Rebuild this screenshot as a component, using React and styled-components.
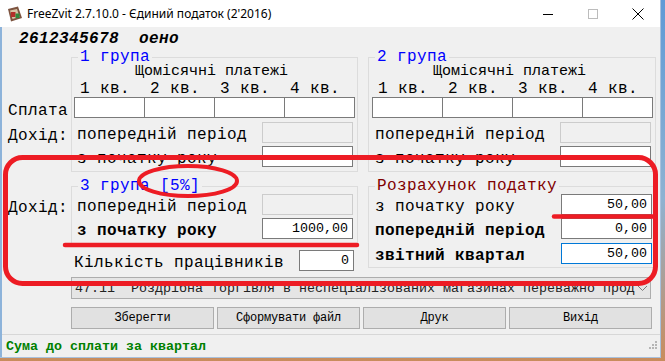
import React from 'react'
import styled, {createGlobalStyle} from 'styled-components'

const MONO = `"Liberation Mono", "Courier New", monospace`

const COLORS = {
  FACE: '#f0f0f0',
  GROUP_BORDER: '#dcdcdc',
  BOX_BORDER: '#7a7a7a',
  BOX_DISABLED: '#cccccc',
  FOCUS: '#0078d7',
  BLUE: '#0000ff',
  MAROON: '#800000',
  GREEN: '#008000',
  RED: '#ed1c24',
  FRAME: '#a9c1dc',
}

const GlobalStyle = createGlobalStyle`
  html, body {
    margin: 0;
    padding: 0;
  }
  body {
    width: 665px;
    height: 361px;
    overflow: hidden;
    background: #6b9fd2;
  }
`

const Desktop = styled.div`
  position: relative;
  width: 665px;
  height: 361px;
  overflow: hidden;
  background: linear-gradient(180deg, #5f9ad6 0%, #8eb2d2 55%, #c98c5c 100%);
`

const Window = styled.div`
  box-sizing: border-box;
  width: 661px;
  height: 358px;
  display: flex;
  flex-direction: column;
  border-right: 1px solid ${COLORS.FRAME};
  border-bottom: 1px solid ${COLORS.FRAME};
`

const TitleBar = styled.div`
  height: 27px;
  flex-shrink: 0;
  display: flex;
  align-items: center;
  background: #fff;
`

const AppIcon = styled.svg`
  margin-left: 7px;
  flex-shrink: 0;
`

const Title = styled.div`
  margin-left: 4px;
  flex-grow: 1;
  font: 12px "Noto Sans", "Liberation Sans", sans-serif;
  color: #000;
`

const CaptionButton = styled.div`
  width: 45px;
  height: 27px;
  display: flex;
  align-items: center;
  justify-content: center;
`

const Body = styled.div`
  flex-grow: 1;
  display: flex;
  flex-direction: column;
  background: ${COLORS.FACE};
  border-left: 2px solid #8db3da;
  font-family: ${MONO};
  color: #000;
`

const IdLine = styled.div`
  height: 23px;
  padding-left: 17px;
  font: italic bold 16px/25px ${MONO};
  letter-spacing: 0.4px;
  white-space: pre;
`

const MainGrid = styled.div`
  display: grid;
  grid-template-columns: 69px 287px 10px 288px;
  grid-template-areas:
    'side1 g1 . g2'
    'side2 g3 . g4';
  row-gap: 7px;
  align-items: start;
`

const LabelColumn = styled.div`
  grid-area: ${(p) => p.$area};
  display: flex;
  flex-direction: column;
  padding-top: ${(p) => p.$top}px;
`

const Cell = styled.div`
  grid-area: ${(p) => p.$area};
  display: flex;
  flex-direction: column;
  min-width: 0;
`

const SideLabel = styled.div`
  height: 21px;
  margin-top: ${(p) => p.$mt ?? 0}px;
  padding-left: 6px;
  font-size: 16px;
  line-height: 28px;
  letter-spacing: 0.4px;
  white-space: nowrap;
`

const Group = styled.fieldset`
  margin: 0;
  min-width: 0;
  padding: 0 0 ${(p) => p.$pb ?? 4}px;
  border: 1px solid ${COLORS.GROUP_BORDER};
`

const Legend = styled.legend`
  margin-left: 6px;
  padding: 0 2px;
  font-size: 16px;
  line-height: 14px;
  letter-spacing: 0.4px;
  color: ${(p) => p.$color};
  white-space: pre;
`

const Monthly = styled.div`
  height: 15px;
  padding-left: ${(p) => p.$indent}px;
  font-size: 15px;
  line-height: 15px;
`

const QuarterGrid = styled.div`
  display: grid;
  grid-template-columns: repeat(4, 70px);
  margin-left: ${(p) => p.$indent}px;
`

const QuarterLabel = styled.div`
  height: 18px;
  padding-left: 6px;
  font-size: 16px;
  line-height: 20px;
  letter-spacing: 0.4px;
  white-space: nowrap;
`

const FieldRow = styled.div`
  height: 21px;
  margin-top: ${(p) => p.$mt ?? 0}px;
  padding: 0 ${(p) => p.$right ?? 4}px 0 ${(p) => p.$indent ?? 5}px;
  display: flex;
  align-items: flex-start;
  justify-content: space-between;
`

const FieldLabel = styled.span`
  padding-top: 3px;
  font-size: 16px;
  line-height: 21px;
  font-weight: ${(p) => (p.$bold ? 700 : 400)};
  letter-spacing: 0.4px;
  white-space: nowrap;
`

const TextBox = styled.input`
  box-sizing: border-box;
  width: ${(p) => p.$w ?? 91}px;
  height: 21px;
  margin: 0;
  padding: 0 4px;
  background: ${(p) => (p.$disabled ? COLORS.FACE : '#fff')};
  border: 1px solid
    ${(p) =>
      p.$focused ? COLORS.FOCUS : p.$disabled ? COLORS.BOX_DISABLED : COLORS.BOX_BORDER};
  border-radius: 0;
  outline: none;
  font: 13.33px/19px ${MONO};
  color: #000;
  text-align: right;
`

const MonthBox = styled(TextBox)`
  width: 71px;
`

const Combo = styled.div`
  box-sizing: border-box;
  width: 580px;
  height: 22px;
  margin: 6px 0 0 69px;
  padding-left: 3px;
  display: flex;
  align-items: center;
  border: 1px solid #adadad;
  background: #e5e5e5;
  font-size: 13.33px;
  color: #222;
  white-space: pre;
  overflow: hidden;
`

const ComboText = styled.span`
  flex-grow: 1;
  overflow: hidden;
`

const ButtonRow = styled.div`
  display: grid;
  grid-template-columns: repeat(4, 143px);
  column-gap: 3px;
  margin: 8px 0 0 69px;
`

const Button = styled.button`
  height: 22px;
  margin: 0;
  padding: 0;
  border: 1px solid #adadad;
  background: #e1e1e1;
  font: 12px ${MONO};
  letter-spacing: -0.2px;
  color: #000;
`

const Separator = styled.div`
  height: 1px;
  margin-top: 5px;
  background: #d7d7d7;
`

const StatusBar = styled.div`
  flex-grow: 1;
  display: flex;
  align-items: center;
  justify-content: space-between;
  padding: 0 2px 0 4px;
`

const StatusText = styled.span`
  font-size: 13.33px;
  font-weight: 700;
  color: ${COLORS.GREEN};
`

const Marks = styled.svg`
  position: absolute;
  left: 0;
  top: 0;
  pointer-events: none;
`

const AmountRow = ({label, bold, value, disabled, focused, mt, indent, right}) => (
  <FieldRow $mt={mt} $indent={indent} $right={right}>
    <FieldLabel $bold={bold}>{label}</FieldLabel>
    <TextBox readOnly value={value ?? ''} $disabled={disabled} $focused={focused} />
  </FieldRow>
)

const MonthlyGroup = ({title, labelIndent, boxIndent, rowIndent}) => (
  <Group>
    <Legend $color={COLORS.BLUE}>{title}</Legend>
    <Monthly $indent={labelIndent}>Щомісячні платежі</Monthly>
    <QuarterGrid $indent={boxIndent}>
      {[1, 2, 3, 4].map((q) => (
        <QuarterLabel key={`ql-${q}`}>{q} кв.</QuarterLabel>
      ))}
      {[1, 2, 3, 4].map((q) => (
        <MonthBox key={`qb-${q}`} readOnly value="" />
      ))}
    </QuarterGrid>
    <AmountRow label="попередній період" disabled mt={4} indent={rowIndent} />
    <AmountRow label="з початку року" mt={3} indent={rowIndent} />
  </Group>
)

const App = () => {
  return (
    <Desktop>
      <GlobalStyle />
      <Window>
        <TitleBar>
          <AppIcon width="16" height="16" viewBox="0 0 16 16">
            <path d="M1 3 L11 0.5 L15 12 L4 15.5 Z" fill="#7d5440" />
            <path d="M3 4.5 L10 3 L12.5 11 L5.5 13 Z" fill="#d8c4a6" />
            <rect x="4" y="6" width="4.5" height="5" fill="#b3302a" />
            <rect x="8.5" y="7.5" width="4" height="4.5" fill="#2f8a3c" />
          </AppIcon>
          <Title>FreeZvit 2.7.10.0 - Єдиний податок (2'2016)</Title>
          <CaptionButton>
            <svg width="10" height="10" viewBox="0 0 10 10">
              <path d="M0 5.5 H10" stroke="#000" strokeWidth="1" />
            </svg>
          </CaptionButton>
          <CaptionButton>
            <svg width="10" height="10" viewBox="0 0 10 10">
              <rect x="0.5" y="0.5" width="9" height="9" fill="none" stroke="#bcbcbc" />
            </svg>
          </CaptionButton>
          <CaptionButton>
            <svg width="12" height="12" viewBox="0 0 12 12">
              <path d="M0.5 0.5 L11.5 11.5 M11.5 0.5 L0.5 11.5" stroke="#000" strokeWidth="1" />
            </svg>
          </CaptionButton>
        </TitleBar>

        <Body>
          <IdLine>2612345678  оено</IdLine>

          <MainGrid>
            <LabelColumn $area="side1" $top={47}>
              <SideLabel>Сплата</SideLabel>
              <SideLabel $mt={4}>Дохід:</SideLabel>
            </LabelColumn>
            <Cell $area="g1">
              <MonthlyGroup title="1 група" labelIndent={63} boxIndent={2} rowIndent={5} />
            </Cell>
            <Cell $area="g2">
              <MonthlyGroup title="2 група" labelIndent={64} boxIndent={3} rowIndent={6} />
            </Cell>

            <LabelColumn $area="side2" $top={15}>
              <SideLabel>Дохід:</SideLabel>
            </LabelColumn>
            <Cell $area="g3">
              <Group $pb={5}>
                <Legend $color={COLORS.BLUE}>3 група [5%]</Legend>
                <AmountRow label="попередній період" disabled mt={1} />
                <AmountRow label="з початку року" bold value="1000,00" mt={3} />
              </Group>
              <FieldRow $mt={5} $indent={3}>
                <FieldLabel>Кількість працівників</FieldLabel>
                <TextBox readOnly value="0" $w={55} />
              </FieldRow>
            </Cell>
            <Cell $area="g4">
              <Group $pb={3}>
                <Legend $color={COLORS.MAROON}>Розрахунок податку</Legend>
                <AmountRow label="з початку року" value="50,00" mt={1} indent={6} right={3} />
                <AmountRow label="попередній період" bold value="0,00" mt={3} indent={6} right={3} />
                <AmountRow label="звітний квартал" bold value="50,00" focused mt={4} indent={6} right={3} />
              </Group>
            </Cell>
          </MainGrid>

          <Combo>
            <ComboText>47.11  Роздрібна торгівля в неспеціалізованих магазинах переважно прод</ComboText>
            <svg width="14" height="10" viewBox="0 0 14 10">
              <path d="M2 3 L6.5 7.5 L11 3" fill="none" stroke="#7a7a7a" strokeWidth="1" />
            </svg>
          </Combo>

          <ButtonRow>
            <Button>Зберегти</Button>
            <Button>Сформувати файл</Button>
            <Button>Друк</Button>
            <Button>Вихід</Button>
          </ButtonRow>

          <Separator />

          <StatusBar>
            <StatusText>Сума до сплати за квартал</StatusText>
            <svg width="10" height="12" viewBox="0 0 10 12">
              <g fill="#b5b5b5">
                <rect x="7" y="1" width="2" height="2" />
                <rect x="4" y="4" width="2" height="2" />
                <rect x="7" y="4" width="2" height="2" />
                <rect x="1" y="7" width="2" height="2" />
                <rect x="4" y="7" width="2" height="2" />
                <rect x="7" y="7" width="2" height="2" />
              </g>
            </svg>
          </StatusBar>
        </Body>
      </Window>

      <Marks width="665" height="361" viewBox="0 0 665 361">
        <g fill="none" stroke={COLORS.RED} strokeLinecap="round">
          <rect x="5.5" y="157.5" width="650" height="126" rx="17" strokeWidth="5" />
          <ellipse cx="188" cy="181" rx="49" ry="15" strokeWidth="4" />
          <path d="M65 245 H357" strokeWidth="4.5" />
          <path d="M554 216.5 H654" strokeWidth="4.5" />
        </g>
      </Marks>
    </Desktop>
  )
}

export default App
